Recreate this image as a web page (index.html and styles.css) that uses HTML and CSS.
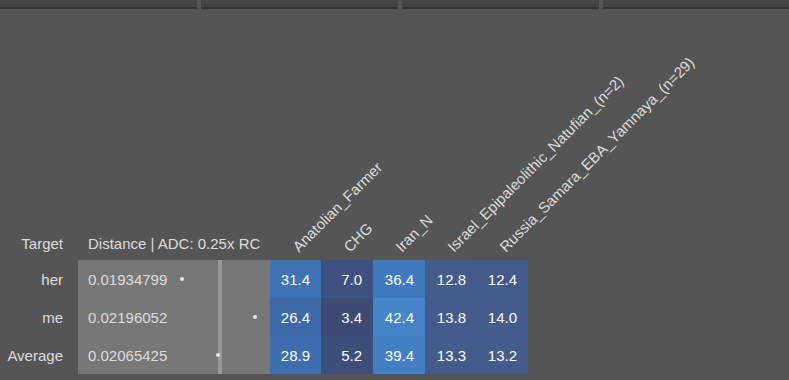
FILE: index.html
```html
<!DOCTYPE html>
<html lang="en">
<head>
<meta charset="utf-8">
<title>Distance table</title>
<link rel="stylesheet" href="styles.css">
</head>
<body>
<nav class="tabs">
  <div class="tab"></div>
  <div class="tab"></div>
  <div class="tab"></div>
  <div class="tab"></div>
</nav>
<main class="grid">
  <div class="head label">Target</div>
  <div class="head dist-label">Distance | ADC: 0.25x RC</div>
  <div class="head pop"><span>Anatolian_Farmer</span></div>
  <div class="head pop"><span>CHG</span></div>
  <div class="head pop"><span>Iran_N</span></div>
  <div class="head pop"><span>Israel_Epipaleolithic_Natufian_(n=2)</span></div>
  <div class="head pop"><span>Russia_Samara_EBA_Yamnaya_(n=29)</span></div>

  <div class="name">her</div>
  <div class="dist">0.01934799<i class="dot" style="left:102px"></i></div>
  <div class="val" style="background:#3d72b5">31.4</div>
  <div class="val" style="background:#3e5180">7.0</div>
  <div class="val" style="background:#3f7abe">36.4</div>
  <div class="val" style="background:#445b8b">12.8</div>
  <div class="val" style="background:#445a8b">12.4</div>

  <div class="name">me</div>
  <div class="dist">0.02196052<i class="dot" style="left:175px"></i></div>
  <div class="val" style="background:#3d69a8">26.4</div>
  <div class="val" style="background:#3d4b74">3.4</div>
  <div class="val" style="background:#4585c7">42.4</div>
  <div class="val" style="background:#445c8d">13.8</div>
  <div class="val" style="background:#445c8e">14.0</div>

  <div class="name">Average</div>
  <div class="dist">0.02065425<i class="dot" style="left:138px"></i></div>
  <div class="val" style="background:#3d6eae">28.9</div>
  <div class="val" style="background:#3e4e7a">5.2</div>
  <div class="val" style="background:#4280c3">39.4</div>
  <div class="val" style="background:#445b8c">13.3</div>
  <div class="val" style="background:#445b8c">13.2</div>
</main>
</body>
</html>
```
FILE: styles.css
```css
html, body {
  margin: 0;
  padding: 0;
  background: #555555;
  font-family: "Liberation Sans", Arial, sans-serif;
  font-size: 15px;
  color: #dddddd;
  overflow: hidden;
}

.tabs {
  display: flex;
  gap: 4px;
  height: 9px;
}

.tab {
  flex: 0 0 197px;
  background: #454545;
  border-bottom: 2px solid #333333;
  box-sizing: border-box;
}

.tab:last-child {
  flex: 1 0 197px;
}

.grid {
  display: grid;
  grid-template-columns: 78px 192px 51px 52px 52px 52px 51px;
  grid-template-rows: 251px repeat(3, 38px);
  width: 528px;
}

.head {
  display: flex;
  align-items: flex-end;
  padding-bottom: 8px;
  line-height: 17px;
  white-space: nowrap;
}

.head.label {
  justify-content: flex-end;
  padding-right: 15px;
}

.head.dist-label {
  padding-left: 10px;
}

.pop {
  position: relative;
}

.pop span {
  position: absolute;
  left: 31px;
  bottom: 5px;
  transform-origin: 0 100%;
  transform: rotate(-45deg);
  line-height: 17px;
}

.name {
  display: flex;
  align-items: center;
  justify-content: flex-end;
  padding-right: 15px;
}

.dist {
  position: relative;
  display: flex;
  align-items: center;
  padding-left: 10px;
  background: #777777;
  color: #dddddd;
}

/* average marker line running through the distance column */
.dist::after {
  content: "";
  position: absolute;
  top: 0;
  bottom: 0;
  left: 140px;
  width: 4px;
  background: #999999;
}

.dot {
  position: absolute;
  top: 50%;
  width: 4px;
  height: 4px;
  margin-top: -2px;
  border-radius: 50%;
  background: #e4e8f0;
  z-index: 1;
}

.val {
  display: flex;
  align-items: center;
  justify-content: flex-end;
  padding-right: 11px;
  color: #ffffff;
}
```
